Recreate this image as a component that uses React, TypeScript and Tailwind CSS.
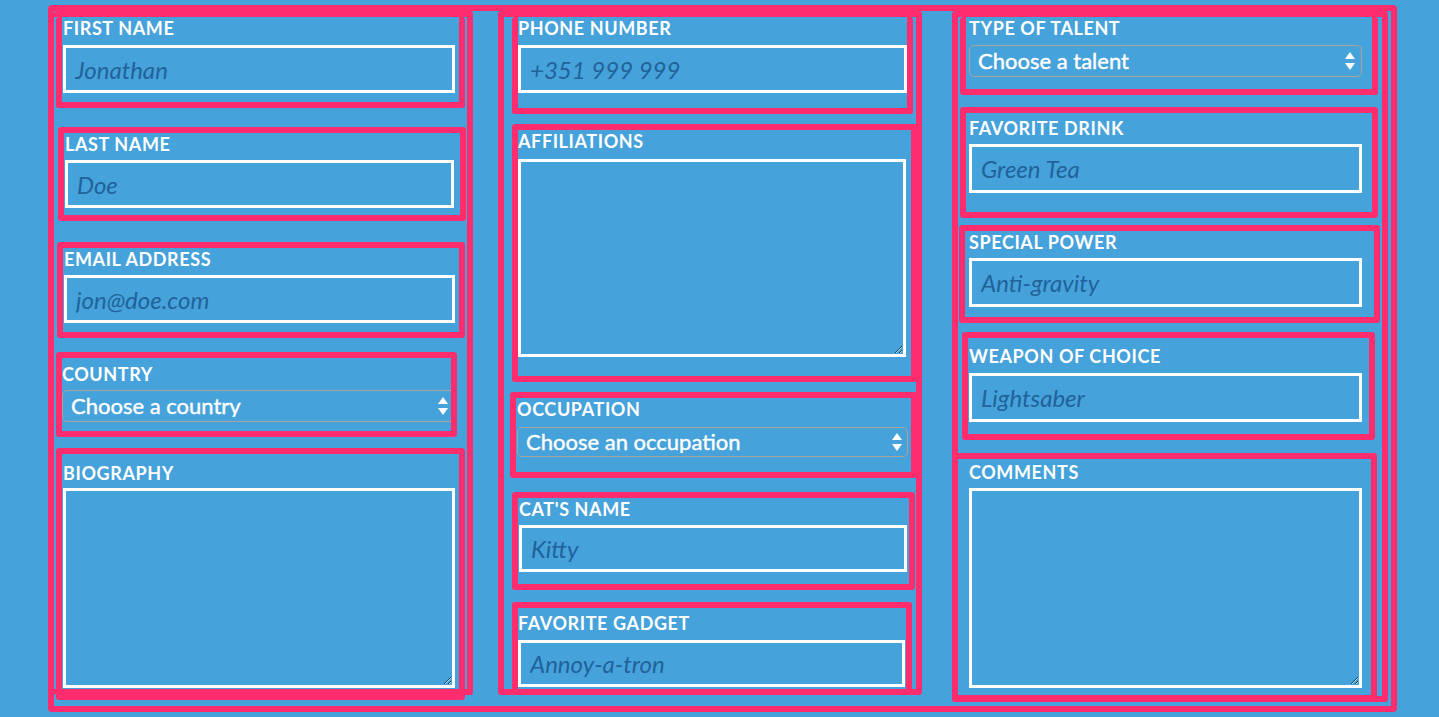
import type { ReactNode } from "react";

const pink = "border-[#ff2d6e]";

function Field({ label, box, children }: { label: string; box: string; children: ReactNode }) {
  return (
    <div className={`shrink-0 border-[6px] ${pink} rounded-[3px] ${box}`}>
      <label className="block text-[18px] leading-[22px] font-bold tracking-[0.6px] text-white uppercase whitespace-nowrap">
        {label}
      </label>
      {children}
    </div>
  );
}

function TextInput({ placeholder, className }: { placeholder: string; className: string }) {
  return (
    <input
      type="text"
      placeholder={placeholder}
      className={`block w-full border-[3px] border-white bg-transparent pl-[9px] text-[24px] text-white outline-none placeholder:italic placeholder:text-[#21629a] ${className}`}
    />
  );
}

function Area({ className }: { className: string }) {
  return (
    <textarea className={`block w-full border-[3px] border-white bg-transparent text-white outline-none ${className}`} />
  );
}

function Select({ text, className, arrow }: { text: string; className: string; arrow: string }) {
  return (
    <div className={`relative ${className}`}>
      <select className="block h-full w-full appearance-none rounded-[5px] border border-[#aaa39c] bg-transparent pl-[8px] text-[22px] leading-none text-white outline-none [-webkit-text-stroke:0.4px_white]">
        <option>{text}</option>
      </select>
      {/* up/down arrows */}
      <svg className={`pointer-events-none absolute top-1/2 -translate-y-1/2 ${arrow}`} width="10" height="18" viewBox="0 0 10 18">
        <path d="M5 0 L10 7 L0 7 Z" fill="white" />
        <path d="M0 11 L10 11 L5 18 Z" fill="white" />
      </svg>
    </div>
  );
}

export default function App() {
  return (
    <div className="h-[717px] w-full overflow-hidden bg-[#46a2da] pt-[5px] font-['Lato','Open_Sans',sans-serif]">
      <div className={`ml-[48px] flex h-[707px] w-[1349px] items-start rounded-[4px] border-[6px] ${pink}`}>
        {/* column 1 */}
        <div className={`flex h-[684px] w-[419px] flex-col border-[6px] border-l-0 ${pink} rounded-[3px]`}>
          <Field label="First name" box="ml-[2px] w-[409px] border-t-0 pl-[1px] pr-[4px] pb-[9px]">
            <TextInput placeholder="Jonathan" className="mt-[6px] h-[48px]" />
          </Field>
          <Field label="Last name" box="mt-[19px] ml-[4px] w-[408px] pl-[1px] pr-[6px] pb-[7px]">
            <TextInput placeholder="Doe" className="mt-[5px] h-[48px]" />
          </Field>
          <Field label="Email address" box="mt-[21px] ml-[3px] w-[408px] pl-[1px] pr-[4px] pb-[9px]">
            <TextInput placeholder="jon@doe.com" className="mt-[5px] h-[48px]" />
          </Field>
          <Field label="Country" box="mt-[14px] ml-[2px] w-[401px] overflow-hidden pt-[5px] pb-[9px]">
            <Select text="Choose a country" className="mt-[5px] h-[32px] w-[395px]" arrow="right-[9px]" />
          </Field>
          <Field label="Biography" box="mt-[11px] ml-[2px] w-[409px] pt-[8px] pl-[1px] pr-[4px] pb-[6px]">
            <Area className="mt-[4px] h-[200px]" />
          </Field>
        </div>

        {/* column 2 */}
        <div className={`ml-[25px] flex h-[684px] w-[424px] flex-col border-[6px] ${pink} rounded-[3px]`}>
          <Field label="Phone number" box="ml-[8px] w-[401px] border-t-0 pb-[15px]">
            <TextInput placeholder="+351 999 999" className="mt-[6px] h-[48px]" />
          </Field>
          <Field label="Affiliations" box="mt-[10px] ml-[8px] w-[405px] pr-[5px] pb-[19px]">
            <Area className="mt-[7px] h-[198px]" />
          </Field>
          <Field label="Occupation" box="mt-[10px] ml-[6px] w-[407px] pl-[1px] pr-[3px] pb-[15px]">
            <Select text="Choose an occupation" className="mt-[7px] h-[30px]" arrow="right-[6px]" />
          </Field>
          <Field label="Cat's name" box="mt-[14px] ml-[8px] w-[403px] pl-[1px] pr-[2px] pb-[12px]">
            <TextInput placeholder="Kitty" className="mt-[5px] h-[47px]" />
          </Field>
          <Field label="Favorite gadget" box="mt-[12px] ml-[8px] w-[400px] pt-[4px] pr-[1px] pb-[2px]">
            <TextInput placeholder="Annoy-a-tron" className="mt-[6px] h-[47px]" />
          </Field>
        </div>

        {/* column 3 */}
        <div className={`ml-[30px] flex h-[691px] w-[436px] flex-col border-[6px] ${pink} rounded-[3px]`}>
          <Field label="Type of talent" box="ml-[2px] w-[418px] border-t-0 pl-[3px] pr-[10px] pb-[12px]">
            <Select text="Choose a talent" className="mt-[6px] h-[32px]" arrow="right-[7px]" />
          </Field>
          <Field label="Favorite drink" box="mt-[12px] ml-[2px] w-[418px] pt-[4px] pl-[3px] pr-[10px] pb-[19px]">
            <TextInput placeholder="Green Tea" className="mt-[5px] h-[49px]" />
          </Field>
          <Field label="Special power" box="mt-[7px] ml-[1px] w-[421px] pl-[4px] pr-[12px] pb-[10px]">
            <TextInput placeholder="Anti-gravity" className="mt-[5px] h-[49px]" />
          </Field>
          <Field label="Weapon of choice" box="mt-[9px] ml-[4px] w-[413px] pt-[7px] pl-[1px] pr-[7px] pb-[12px]">
            <TextInput placeholder="Lightsaber" className="mt-[6px] h-[49px]" />
          </Field>
          <Field label="Comments" box="mt-[13px] -ml-[6px] w-[425px] pt-[2px] pl-[11px] pr-[9px] pb-[7px]">
            <Area className="mt-[5px] h-[200px]" />
          </Field>
        </div>
      </div>
    </div>
  );
}
